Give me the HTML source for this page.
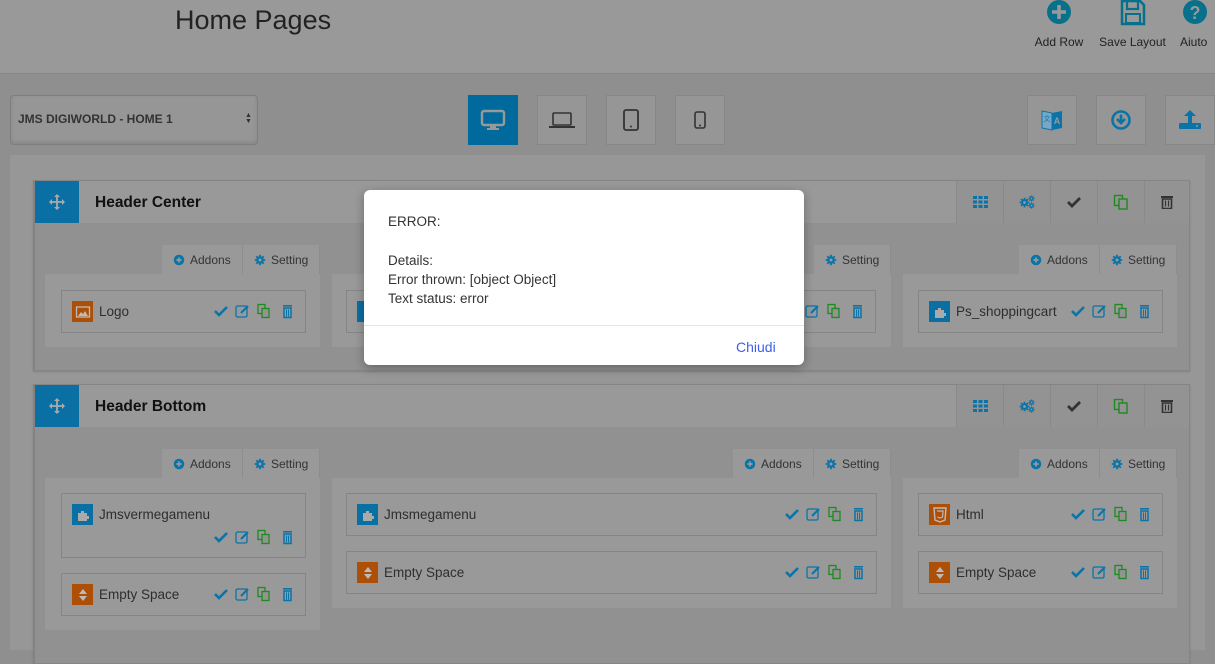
<!DOCTYPE html>
<html><head><meta charset="utf-8"><style>
*{box-sizing:border-box;margin:0;padding:0}
body{width:1215px;height:650px;overflow:hidden;background:#8f8f8f;font-family:"Liberation Sans","DejaVu Sans",sans-serif;color:#2b2b2b;position:relative}
.a{position:absolute}
.hdr{left:0;top:0;width:1215px;height:74px;background:#999;border-bottom:1px solid #868686}
.title{left:175px;top:5px;font-size:27px;color:#222}
.tb{font-size:12px;color:#222;text-align:center}
.btn{background:#969696;border:1px solid #878787;width:50px;height:50px;display:flex;align-items:center;justify-content:center}
.content{left:10px;top:155px;width:1195px;height:495px;background:#979797}
.row{background:#919191;border:1px solid #858585;border-left:2px solid #838383;box-shadow:0 1px 2px rgba(0,0,0,.15)}
.rh{left:0;top:0;right:0;height:42px;background:#999}
.handle{left:0;top:0;width:44px;height:42px;background:#0a6fa3;display:flex;align-items:center;justify-content:center}
.rt{left:60px;top:13px;font-weight:bold;font-size:15.5px;color:#111}
.cells{top:0;right:0;height:42px;display:flex}
.cell{width:47px;height:42px;background:#939393;border-left:1px solid #898989;display:flex;align-items:center;justify-content:center}
.tab{height:29px;background:#999;font-size:12px;color:#333;display:flex;align-items:center;gap:5px;padding-left:11px;border-right:1px solid #8d8d8d}
.col{background:#999}
.it{border:1px solid #858585;background:#999;font-size:13.5px;color:#2e2e2e}
.ic{position:absolute;left:10px;top:10px;width:21px;height:21px;display:flex;align-items:center;justify-content:center}
.o{background:#ae4f08}.b{background:#0a6fa3}
.nm{position:absolute;left:37px;top:13px}
.acts{position:absolute;right:9px;top:12px}
.modal{left:364px;top:190px;width:440px;height:175px;background:#fff;border-radius:6px;box-shadow:0 3px 10px rgba(0,0,0,.3)}
.mt{left:24px;top:22px;font-size:13.5px;line-height:19.3px;color:#333}
.sep{left:0;top:135px;width:440px;height:1px;background:#e4e4e4}
.ch{left:372px;top:149px;color:#3f5fe6;font-size:14px}
</style></head><body>
<svg width="0" height="0" style="position:absolute"><defs>
<symbol id="acts" viewBox="0 0 82 16">
<path d="M1 8l4 4 8-8" fill="none" stroke="#0a73a8" stroke-width="2.6"/>
<rect x="22" y="3" width="11" height="11" rx="1.5" fill="none" stroke="#0a73a8" stroke-width="1.3"/><path d="M27 10l7-7" stroke="#0a73a8" stroke-width="2"/>
<rect x="44" y="1.5" width="7" height="9" fill="none" stroke="#1f8a1f" stroke-width="1.3"/><rect x="48" y="5.5" width="7" height="9" fill="#939393" stroke="#1f8a1f" stroke-width="1.3"/>
<rect x="69" y="2" width="9" height="1.6" fill="#0a73a8"/><path d="M70 5h7v9.5h-7z" fill="none" stroke="#0a73a8" stroke-width="1.5"/><path d="M72.5 6.5v7M74.5 6.5v7" stroke="#0a73a8" stroke-width="1"/>
</symbol>
<symbol id="puz" viewBox="0 0 16 16"><path d="M3 6h3V4h3v2h3v3h2v3h-2v2H3z" fill="#aaa"/></symbol>
<symbol id="es" viewBox="0 0 16 16"><path d="M8 2l4 5H4zM8 14l4-5H4z" fill="#bbb"/></symbol>
<symbol id="img" viewBox="0 0 16 16"><rect x="1.5" y="3" width="13" height="10" fill="none" stroke="#bbb" stroke-width="1.3"/><path d="M3 12l3-4 2 2 2-3 3 5z" fill="#bbb"/></symbol>
<symbol id="plus" viewBox="0 0 16 16"><circle cx="8" cy="8" r="7" fill="#0a73a8"/><path d="M8 4.5v7M4.5 8h7" stroke="#999" stroke-width="2.2"/></symbol>
<symbol id="gear" viewBox="0 0 16 16"><circle cx="8" cy="8" r="5" fill="#0a73a8"/><path d="M8 1v14M1 8h14M3 3l10 10M13 3L3 13" stroke="#0a73a8" stroke-width="2.4"/><circle cx="8" cy="8" r="2" fill="#999"/></symbol>
</defs></svg>

<div class="a hdr"></div>
<div class="a title">Home Pages</div>
<svg class="a" style="left:1046px;top:0" width="26" height="26"><circle cx="13" cy="12" r="12" fill="#07708a"/><path d="M13 5v14M6 12h14" stroke="#999" stroke-width="3.5"/></svg>
<div class="a tb" style="left:1030px;top:35px;width:58px">Add Row</div>
<svg class="a" style="left:1120px;top:0" width="26" height="26"><path d="M2 1h18l4 4v19H2z" fill="none" stroke="#07708a" stroke-width="2.5"/><rect x="7" y="1" width="11" height="8" fill="none" stroke="#07708a" stroke-width="2.2"/><rect x="6" y="14" width="14" height="9" fill="none" stroke="#07708a" stroke-width="2"/></svg>
<div class="a tb" style="left:1096px;top:35px;width:73px">Save Layout</div>
<svg class="a" style="left:1183px;top:0" width="26" height="26"><circle cx="12" cy="12" r="12" fill="#07708a"/><text x="12" y="19" font-size="18" font-weight="bold" fill="#999" text-anchor="middle" font-family="Liberation Sans">?</text></svg>
<div class="a tb" style="left:1180px;top:35px">Aiuto</div>

<div class="a" style="left:10px;top:95px;width:248px;height:50px;background:#969696;border:1px solid #7e7e7e;border-radius:4px;box-shadow:inset 0 -2px 4px rgba(0,0,0,.1)"></div>
<div class="a" style="left:18px;top:112px;font-size:12px;font-weight:bold;color:#333">JMS DIGIWORLD - HOME 1</div>
<div class="a" style="left:245px;top:113px;font-size:7px;line-height:6px;color:#333">▲<br>▼</div>

<div class="a btn" style="left:468px;top:95px;background:#006a9c;border-color:#006a9c"><svg width="26" height="22"><rect x="2" y="2" width="22" height="14" rx="2" fill="none" stroke="#999" stroke-width="2.4"/><rect x="10" y="16" width="6" height="3" fill="#999"/><rect x="7" y="19" width="12" height="2" fill="#999"/></svg></div>
<div class="a btn" style="left:537px;top:95px"><svg width="26" height="20"><rect x="4" y="3" width="18" height="12" rx="1" fill="none" stroke="#333" stroke-width="1.6"/><rect x="0" y="16" width="26" height="2" fill="#333"/></svg></div>
<div class="a btn" style="left:606px;top:95px"><svg width="16" height="22"><rect x="1" y="1" width="14" height="20" rx="2" fill="none" stroke="#333" stroke-width="1.8"/><circle cx="8" cy="17.5" r="1" fill="#333"/></svg></div>
<div class="a btn" style="left:675px;top:95px"><svg width="12" height="18"><rect x="1" y="1" width="10" height="16" rx="2" fill="none" stroke="#333" stroke-width="1.6"/><circle cx="6" cy="14.5" r="1" fill="#333"/></svg></div>
<div class="a btn" style="left:1027px;top:95px"><svg width="22" height="24"><path d="M1 3l10 2v17L1 20z" fill="#7aa8c4" stroke="#0a73a8"/><path d="M11 5l10-2v17l-10 2z" fill="#0a73a8"/><text x="16" y="16" font-size="9" fill="#999" text-anchor="middle" font-weight="bold">A</text><text x="6" y="13" font-size="7" fill="#0a73a8" text-anchor="middle">文</text></svg></div>
<div class="a btn" style="left:1096px;top:95px"><svg width="22" height="22"><circle cx="11" cy="11" r="8.5" fill="none" stroke="#0a73a8" stroke-width="2.6"/><path d="M11 5.5v8M7 10l4 4 4-4" fill="none" stroke="#0a73a8" stroke-width="2.6"/></svg></div>
<div class="a btn" style="left:1165px;top:95px"><svg width="24" height="22"><path d="M12 1l6 6h-4v7h-4V7H6z" fill="#0a73a8"/><rect x="1" y="14" width="22" height="6" rx="1" fill="#0a73a8"/><circle cx="19" cy="17" r="1" fill="#999"/></svg></div>

<div class="a content"></div>

<div class="a row" style="left:33px;top:180px;width:1157px;height:191px">
 <div class="a rh"></div>
 <div class="a handle"><svg width="16" height="16"><path d="M8 1v14M1 8h14" stroke="#aaa" stroke-width="1.8"/><path d="M8 0l3 3H5zM8 16l3-3H5zM0 8l3-3v6zM16 8l-3-3v6z" fill="#aaa"/></svg></div>
 <div class="a rt">Header Center</div>
 <div class="a cells">
  <div class="cell"><svg width="15" height="12"><g fill="#0a73a8"><rect x="0" y="0" width="4" height="3"/><rect x="5.5" y="0" width="4" height="3"/><rect x="11" y="0" width="4" height="3"/><rect x="0" y="4.5" width="4" height="3"/><rect x="5.5" y="4.5" width="4" height="3"/><rect x="11" y="4.5" width="4" height="3"/><rect x="0" y="9" width="4" height="3"/><rect x="5.5" y="9" width="4" height="3"/><rect x="11" y="9" width="4" height="3"/></g></svg></div>
  <div class="cell"><svg width="16" height="14"><use href="#gear" x="0" y="2" width="11" height="11"/><use href="#gear" x="9" y="0" width="7" height="7"/><use href="#gear" x="9" y="7" width="7" height="7"/></svg></div>
  <div class="cell"><svg width="14" height="12"><path d="M1 6l4 4 8-8" fill="none" stroke="#333" stroke-width="2.8"/></svg></div>
  <div class="cell"><svg width="16" height="16"><rect x="1.5" y="1.5" width="8" height="10" fill="none" stroke="#1f8a1f" stroke-width="1.4"/><rect x="6" y="5" width="8" height="10" fill="#939393" stroke="#1f8a1f" stroke-width="1.4"/></svg></div>
  <div class="cell" style="width:45px"><svg width="12" height="14"><rect x="0" y="1" width="12" height="2" fill="#333"/><path d="M1.5 4h9v9.5h-9z" fill="none" stroke="#333" stroke-width="1.6"/><path d="M4.5 5.5v6M7.5 5.5v6" stroke="#333" stroke-width="1.2"/></svg></div>
 </div>
</div>
<div class="a row" style="left:33px;top:384px;width:1157px;height:280px">
 <div class="a rh"></div>
 <div class="a handle"><svg width="16" height="16"><path d="M8 1v14M1 8h14" stroke="#aaa" stroke-width="1.8"/><path d="M8 0l3 3H5zM8 16l3-3H5zM0 8l3-3v6zM16 8l-3-3v6z" fill="#aaa"/></svg></div>
 <div class="a rt">Header Bottom</div>
 <div class="a cells">
  <div class="cell"><svg width="15" height="12"><g fill="#0a73a8"><rect x="0" y="0" width="4" height="3"/><rect x="5.5" y="0" width="4" height="3"/><rect x="11" y="0" width="4" height="3"/><rect x="0" y="4.5" width="4" height="3"/><rect x="5.5" y="4.5" width="4" height="3"/><rect x="11" y="4.5" width="4" height="3"/><rect x="0" y="9" width="4" height="3"/><rect x="5.5" y="9" width="4" height="3"/><rect x="11" y="9" width="4" height="3"/></g></svg></div>
  <div class="cell"><svg width="16" height="14"><use href="#gear" x="0" y="2" width="11" height="11"/><use href="#gear" x="9" y="0" width="7" height="7"/><use href="#gear" x="9" y="7" width="7" height="7"/></svg></div>
  <div class="cell"><svg width="14" height="12"><path d="M1 6l4 4 8-8" fill="none" stroke="#333" stroke-width="2.8"/></svg></div>
  <div class="cell"><svg width="16" height="16"><rect x="1.5" y="1.5" width="8" height="10" fill="none" stroke="#1f8a1f" stroke-width="1.4"/><rect x="6" y="5" width="8" height="10" fill="#939393" stroke="#1f8a1f" stroke-width="1.4"/></svg></div>
  <div class="cell" style="width:45px"><svg width="12" height="14"><rect x="0" y="1" width="12" height="2" fill="#333"/><path d="M1.5 4h9v9.5h-9z" fill="none" stroke="#333" stroke-width="1.6"/><path d="M4.5 5.5v6M7.5 5.5v6" stroke="#333" stroke-width="1.2"/></svg></div>
 </div>
</div>

<div class="a tab" style="left:162px;top:245px;width:81px"><svg width="12" height="12"><use href="#plus" width="12" height="12"/></svg>Addons</div>
<div class="a tab" style="left:243px;top:245px;width:77px"><svg width="12" height="12"><use href="#gear" width="12" height="12"/></svg>Setting</div>
<div class="a col" style="left:45px;top:274px;width:275px;height:73px"></div>
<div class="a it" style="left:61px;top:290px;width:245px;height:43px"><span class="ic o"><svg width="16" height="16"><use href="#img" width="16" height="16"/></svg></span><span class="nm">Logo</span><svg class="acts" width="82" height="16"><use href="#acts"/></svg></div>

<div class="a tab" style="left:814px;top:245px;width:77px"><svg width="12" height="12"><use href="#gear" width="12" height="12"/></svg>Setting</div>
<div class="a col" style="left:332px;top:274px;width:559px;height:73px"></div>
<div class="a it" style="left:346px;top:290px;width:530px;height:43px"><span class="ic b"></span><svg class="acts" width="82" height="16"><use href="#acts"/></svg></div>

<div class="a tab" style="left:1019px;top:245px;width:81px"><svg width="12" height="12"><use href="#plus" width="12" height="12"/></svg>Addons</div>
<div class="a tab" style="left:1100px;top:245px;width:77px"><svg width="12" height="12"><use href="#gear" width="12" height="12"/></svg>Setting</div>
<div class="a col" style="left:903px;top:274px;width:274px;height:73px"></div>
<div class="a it" style="left:918px;top:290px;width:245px;height:43px"><span class="ic b"><svg width="16" height="16"><use href="#puz" width="16" height="16"/></svg></span><span class="nm">Ps_shoppingcart</span><svg class="acts" width="82" height="16"><use href="#acts"/></svg></div>

<div class="a tab" style="left:162px;top:449px;width:81px"><svg width="12" height="12"><use href="#plus" width="12" height="12"/></svg>Addons</div>
<div class="a tab" style="left:243px;top:449px;width:77px"><svg width="12" height="12"><use href="#gear" width="12" height="12"/></svg>Setting</div>
<div class="a col" style="left:45px;top:478px;width:275px;height:152px"></div>
<div class="a it" style="left:61px;top:493px;width:245px;height:65px"><span class="ic b"><svg width="16" height="16"><use href="#puz" width="16" height="16"/></svg></span><span class="nm">Jmsvermegamenu</span><svg class="acts" style="top:35px" width="82" height="16"><use href="#acts"/></svg></div>
<div class="a it" style="left:61px;top:573px;width:245px;height:43px"><span class="ic o"><svg width="16" height="16"><use href="#es" width="16" height="16"/></svg></span><span class="nm">Empty Space</span><svg class="acts" width="82" height="16"><use href="#acts"/></svg></div>

<div class="a tab" style="left:733px;top:449px;width:81px"><svg width="12" height="12"><use href="#plus" width="12" height="12"/></svg>Addons</div>
<div class="a tab" style="left:814px;top:449px;width:77px"><svg width="12" height="12"><use href="#gear" width="12" height="12"/></svg>Setting</div>
<div class="a col" style="left:332px;top:478px;width:559px;height:130px"></div>
<div class="a it" style="left:346px;top:493px;width:531px;height:43px"><span class="ic b"><svg width="16" height="16"><use href="#puz" width="16" height="16"/></svg></span><span class="nm">Jmsmegamenu</span><svg class="acts" width="82" height="16"><use href="#acts"/></svg></div>
<div class="a it" style="left:346px;top:551px;width:531px;height:43px"><span class="ic o"><svg width="16" height="16"><use href="#es" width="16" height="16"/></svg></span><span class="nm">Empty Space</span><svg class="acts" width="82" height="16"><use href="#acts"/></svg></div>

<div class="a tab" style="left:1019px;top:449px;width:81px"><svg width="12" height="12"><use href="#plus" width="12" height="12"/></svg>Addons</div>
<div class="a tab" style="left:1100px;top:449px;width:77px"><svg width="12" height="12"><use href="#gear" width="12" height="12"/></svg>Setting</div>
<div class="a col" style="left:903px;top:478px;width:274px;height:130px"></div>
<div class="a it" style="left:918px;top:493px;width:245px;height:43px"><span class="ic o"><svg width="14" height="16"><path d="M1 1h12l-1 12-5 2-5-2z" fill="none" stroke="#bbb" stroke-width="1.4"/><path d="M4 4h6l-.5 6L7 11l-2.5-1" fill="none" stroke="#bbb" stroke-width="1.2"/></svg></span><span class="nm">Html</span><svg class="acts" width="82" height="16"><use href="#acts"/></svg></div>
<div class="a it" style="left:918px;top:551px;width:245px;height:43px"><span class="ic o"><svg width="16" height="16"><use href="#es" width="16" height="16"/></svg></span><span class="nm">Empty Space</span><svg class="acts" width="82" height="16"><use href="#acts"/></svg></div>

<div class="a modal">
 <div class="a mt">ERROR:<br><br>Details:<br>Error thrown: [object Object]<br>Text status: error</div>
 <div class="a sep"></div>
 <div class="a ch">Chiudi</div>
</div>
</body></html>
